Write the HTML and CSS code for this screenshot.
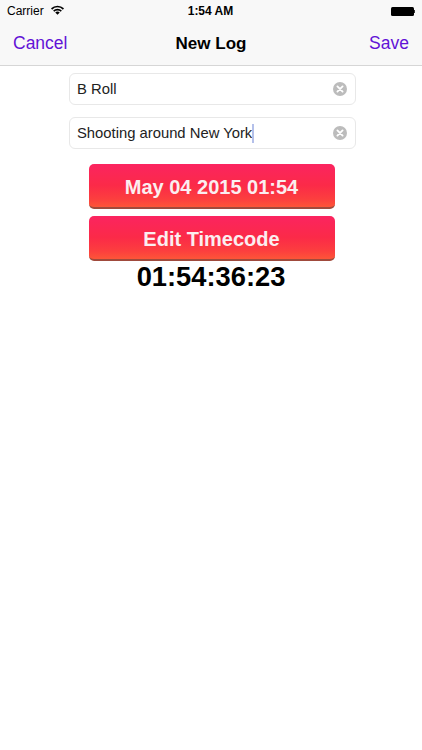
FILE: index.html
```html
<!DOCTYPE html>
<html lang="en">
<head>
<meta charset="utf-8">
<title>New Log</title>
<link rel="stylesheet" href="styles.css">
</head>
<body>
<header class="chrome">
  <div class="status">
    <div class="status-left">
      <span>Carrier</span>
      <svg class="wifi" viewBox="0 0 14 10" width="13" height="10" aria-hidden="true">
        <path d="M0 3.2A9.9 9.9 0 0 1 14 3.2L12.8 4.6A8.1 8.1 0 0 0 1.2 4.6Z"/>
        <path d="M2.3 5.5A6.6 6.6 0 0 1 11.7 5.5L10.5 6.9A5 5 0 0 0 3.5 6.9Z"/>
        <path d="M4.6 7.7A3.4 3.4 0 0 1 9.4 7.7L7 10Z"/>
      </svg>
    </div>
    <div class="status-time">1:54 AM</div>
    <div class="status-right">
      <span class="battery"></span><span class="battery-tip"></span>
    </div>
  </div>
  <nav class="nav">
    <span class="nav-action">Cancel</span>
    <span class="nav-title">New Log</span>
    <span class="nav-action nav-action-end">Save</span>
  </nav>
</header>
<main class="content">
  <div class="field">
    <span class="field-text">B Roll</span>
    <svg class="clear" viewBox="0 0 14 14" width="14" height="14" aria-hidden="true">
      <circle cx="7" cy="7" r="7" fill="#bcbcbc"/>
      <path d="M4.4 4.4L9.6 9.6M9.6 4.4L4.4 9.6" stroke="#fff" stroke-width="1.8" stroke-linecap="round"/>
    </svg>
  </div>
  <div class="field">
    <span class="field-text">Shooting around New York<span class="caret"></span></span>
    <svg class="clear" viewBox="0 0 14 14" width="14" height="14" aria-hidden="true">
      <circle cx="7" cy="7" r="7" fill="#bcbcbc"/>
      <path d="M4.4 4.4L9.6 9.6M9.6 4.4L4.4 9.6" stroke="#fff" stroke-width="1.8" stroke-linecap="round"/>
    </svg>
  </div>
  <div class="btn btn-date">May 04 2015 01:54</div>
  <div class="btn btn-edit">Edit Timecode</div>
  <div class="timecode">01:54:36:23</div>
</main>
</body>
</html>
```
FILE: styles.css
```css
html, body {
  margin: 0;
  padding: 0;
  background: #fff;
}
body {
  width: 422px;
  height: 750px;
  overflow: hidden;
  font-family: "Liberation Sans", Arial, sans-serif;
  color: #000;
}
.chrome {
  height: 66px;
  box-sizing: border-box;
  background: #f8f8f8;
  border-bottom: 1px solid #d6d6d6;
}
.status {
  height: 22px;
  padding: 0 7px;
  display: grid;
  grid-template-columns: 1fr auto 1fr;
  align-items: center;
  font-size: 12px;
}
.status-left {
  display: flex;
  align-items: center;
  gap: 7px;
}
.wifi {
  fill: #000;
  margin-top: -2px;
}
.status-time {
  font-weight: 700;
  font-size: 12px;
  margin-left: -1px;
}
.status-right {
  display: flex;
  justify-content: flex-end;
  align-items: center;
}
.battery {
  width: 23px;
  height: 9px;
  background: #000;
  border-radius: 1.5px;
}
.battery-tip {
  width: 1.5px;
  height: 3px;
  background: #333;
}
.nav {
  height: 43px;
  padding: 0 13px;
  display: grid;
  grid-template-columns: 1fr auto 1fr;
  align-items: center;
}
.nav-action {
  font-size: 17.5px;
  color: #6212d6;
}
.nav-action-end {
  justify-self: end;
}
.nav-title {
  font-size: 17px;
  font-weight: 700;
}
.content {
  display: flex;
  flex-direction: column;
  align-items: center;
  padding: 7px 0 0 3px;
}
.field {
  width: 287px;
  height: 32px;
  box-sizing: border-box;
  margin-bottom: 12px;
  padding: 0 8px 0 7px;
  display: flex;
  justify-content: space-between;
  align-items: center;
  background: #fff;
  border: 1px solid #e8e8e8;
  border-radius: 6px;
  font-size: 14.8px;
  color: #222;
}
.field-text {
  display: flex;
  align-items: center;
}
.caret {
  width: 1.5px;
  height: 19px;
  background: #b4c0ea;
}
.btn {
  width: 246px;
  height: 45px;
  box-sizing: border-box;
  margin-right: 2px;
  padding-top: 3px;
  display: flex;
  align-items: center;
  justify-content: center;
  color: #fbeef0;
  font-size: 20px;
  font-weight: 700;
  background: linear-gradient(#fb2460 0%, #fb2a48 50%, #fc3f3e 82%, #fd5538 100%);
  border-bottom: 2px solid #a04a3c;
  border-radius: 5px;
}
.btn-date {
  margin-top: 3px;
}
.btn-edit {
  margin-top: 7px;
}
.timecode {
  margin-right: 3px;
  font-size: 27.3px;
  font-weight: 700;
  line-height: 31px;
}
```
